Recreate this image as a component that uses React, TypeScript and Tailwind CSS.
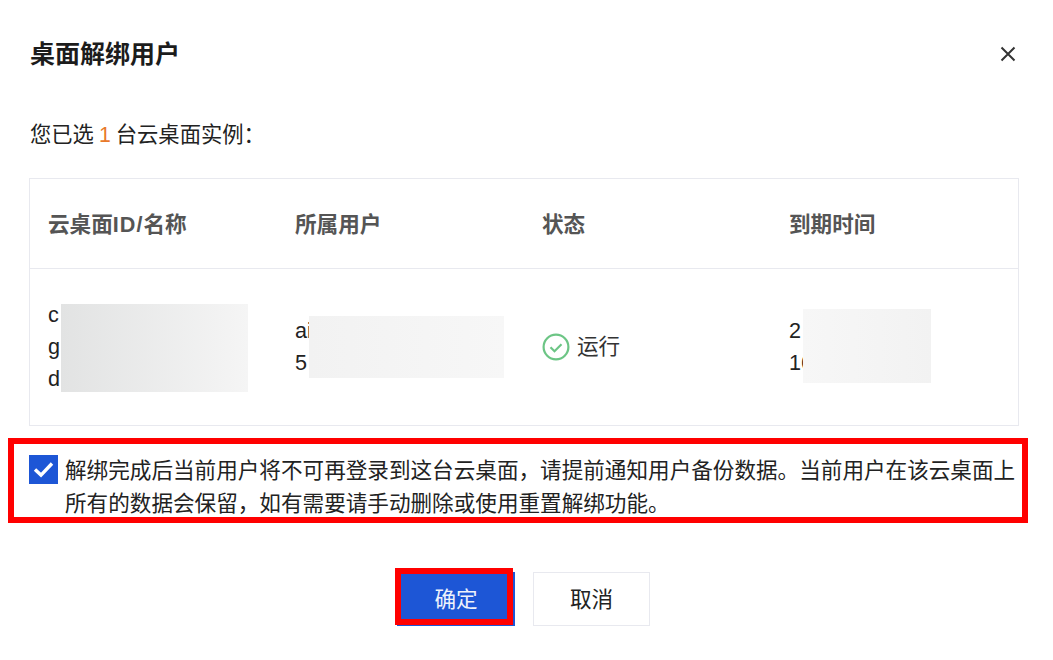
const cjk = 'font-["Liberation_Sans","Noto_Sans_CJK_SC",sans-serif]';

function Patch({ className }: { className: string }) {
  return <div className={`absolute ${className}`} />;
}

export default function App() {
  return (
    <div className={`relative h-[660px] w-[1053px] overflow-hidden bg-white ${cjk} text-[21.6px] text-[#222]`}>
      <div className="flex h-[108px] items-center justify-between pl-[30px] pr-[36px]">
        <h2 className="text-[25px] font-bold leading-9 text-[#1c1c1c]">桌面解绑用户</h2>
        <svg width="18" height="18" viewBox="0 0 18 18" fill="none" stroke="#333" strokeWidth="2">
          <path d="M2.5 2.5l13 13M15.5 2.5l-13 13" />
        </svg>
      </div>

      <p className="flex h-[54px] items-center pl-[30px] text-[21.3px] leading-8">
        您已选<span className="mx-[5px] text-[#e8792b]">1</span>台云桌面实例：
      </p>

      <div className="ml-[29px] mt-[16px] w-[990px] border border-[#e8e9ef]">
        <div className="grid h-[90px] grid-cols-[247px_247px_247px_1fr] items-center border-b border-[#e8e9ef] pl-[18px] pt-[4px] font-bold text-[#555]">
          <div>
            云桌面<span className="tracking-[1px]">ID/</span>名称
          </div>
          <div>所属用户</div>
          <div>状态</div>
          <div>到期时间</div>
        </div>
        <div className="grid h-[156px] grid-cols-[247px_247px_247px_1fr] items-center pl-[18px] leading-[32px]">
          <div className="relative">
            c<br />g<br />d
            <Patch className="top-[5px] left-[13px] h-[88px] w-[187px] bg-gradient-to-r from-[#e2e3e3] to-[#f5f5f5]" />
          </div>
          <div className="relative">
            ai<br />5
            <Patch className="top-[1px] left-[14px] h-[62px] w-[195px] bg-gradient-to-r from-[#f2f2f2] to-[#f7f7f7]" />
          </div>
          <div className="flex items-center gap-[7px]">
            <svg width="28" height="28" viewBox="0 0 28 28" fill="none" stroke="#6cc585">
              <circle cx="14" cy="14" r="12.4" strokeWidth="2.2" />
              <path d="M8.5 14.2l4 4 7-7" strokeWidth="2.2" />
            </svg>
            <span className="text-[#333]">运行</span>
          </div>
          <div className="relative">
            2<br />16
            <Patch className="-top-[6px] left-[14px] h-[74px] w-[128px] bg-gradient-to-r from-[#f7f7f7] to-[#f2f2f2]" />
          </div>
        </div>
      </div>

      <div className="ml-[8px] mt-[12px] flex h-[85px] w-[1020px] gap-[7px] border-[6px] border-[#ff0000] pl-[15px] pt-[10px] leading-[33px]">
        <div className="mt-[1px] flex h-[29px] w-[29px] shrink-0 items-center justify-center bg-[#1d56d6]">
          <svg width="21" height="17" viewBox="0 0 21 17" fill="none" stroke="#fff" strokeWidth="3.4">
            <path d="M2 8.5l6 5.6L19 2.5" />
          </svg>
        </div>
        <p className="w-[960px]">
          解绑完成后当前用户将不可再登录到这台云桌面，请提前通知用户备份数据。当前用户在该云桌面上所有的数据会保留，如有需要请手动删除或使用重置解绑功能。
        </p>
      </div>

      <div className="mt-[49px] flex justify-center gap-[18px]">
        <div className="relative ml-[-6px] flex h-[54px] w-[118px] items-center justify-center bg-[#1d56d6] pt-[2px] text-[#eef2fb]">
          确定
          <div className="absolute -left-[2px] -top-[4px] h-[57px] w-[118px] border-[6px] border-[#ff0000]" />
        </div>
        <div className="flex h-[54px] w-[117px] items-center justify-center border border-[#e8e9ef] pt-[2px]">取消</div>
      </div>
    </div>
  );
}
